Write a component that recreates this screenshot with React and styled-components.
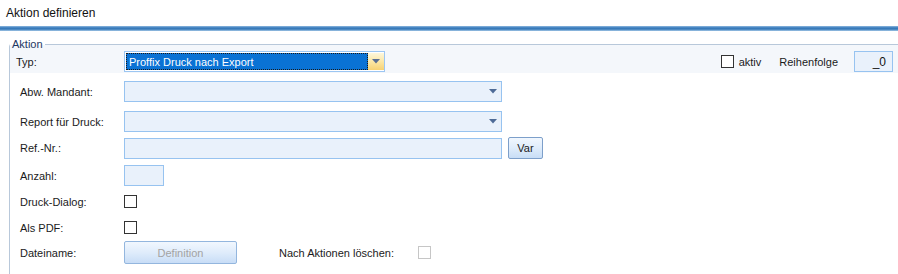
import styled, { createGlobalStyle } from "styled-components";

const Global = createGlobalStyle`
  html, body {
    margin: 0;
    background: #fff;
    overflow: hidden;
  }
  body {
    font-family: "Liberation Sans", Arial, sans-serif;
    font-size: 11px;
    color: #1b1b1b;
  }
`;

const Header = styled.div`
  height: 26px;
  display: flex;
  align-items: center;
  padding-left: 6px;
  font-size: 12px;
  color: #111;
`;

const BlueBar = styled.div`
  height: 5px;
  background: linear-gradient(
    to bottom,
    #8fb9df 0%,
    #3f80bf 35%,
    #3276b6 60%,
    #a3c7e7 100%
  );
`;

const Group = styled.fieldset`
  margin: 7px 0 0 9px;
  padding: 0 0 20px 0;
  min-width: 0;
  border: 1px solid #b8c8da;
  border-right: none;
  border-bottom: none;
  border-radius: 3px 0 0 0;
  background: linear-gradient(to bottom, #f4f7fb 0, #f4f7fb 28px, #fff 28px);
  legend {
    margin-left: 0;
    padding: 0 2px;
    font-size: 11px;
    color: #1e3762;
  }
`;

const Row = styled.div`
  display: flex;
  align-items: center;
  height: ${(p) => p.$h || 21}px;
  margin-top: ${(p) => p.$mt || 0}px;
  padding-left: ${(p) => p.$indent ?? 10}px;
  padding-right: 5px;
`;

const Label = styled.span`
  width: ${(p) => p.$w || 104}px;
  flex: none;
  white-space: nowrap;
`;

const Field = styled.div`
  box-sizing: border-box;
  width: ${(p) => p.$w}px;
  height: ${(p) => p.$h || 21}px;
  border: 1px solid #97c3f0;
  background: #e9f1fb;
  display: flex;
  align-items: center;
  justify-content: flex-end;
  padding: 0 6px;
  font-size: 12px;
  color: #111;
`;

const TypCombo = styled.div`
  box-sizing: border-box;
  width: 261px;
  height: 21px;
  border: 1px solid #9cc6f2;
  background: #fff;
  display: flex;
  padding: 1px 0 1px 1px;
`;

const Selected = styled.div`
  flex: 1;
  box-sizing: border-box;
  background: #0a72d4;
  border: 1px dotted #1a1a1a;
  color: #fff;
  font-size: 11px;
  display: flex;
  align-items: center;
  padding-left: 2px;
`;

const YellowButton = styled.div`
  width: 16px;
  display: flex;
  align-items: center;
  justify-content: center;
  background: linear-gradient(to bottom, #fdf7dc 0%, #fbe7a6 50%, #f7d273 100%);
`;

const ArrowIcon = ({ color = "#4e6b97" }) => (
  <svg width="8" height="5" viewBox="0 0 8 5">
    <polygon points="0,0 8,0 4,4.5" fill={color} />
  </svg>
);

const Combo = styled(Field)`
  padding-right: 4px;
`;

const Box = styled.span`
  box-sizing: border-box;
  display: inline-block;
  width: 13px;
  height: 13px;
  flex: none;
  background: #fff;
  border: 1px solid ${(p) => (p.$disabled ? "#c6c6c6" : "#333")};
`;

const Right = styled.div`
  margin-left: auto;
  display: flex;
  align-items: center;
`;

const RightText = styled.span`
  margin-left: ${(p) => p.$ml || 0}px;
  font-size: 11px;
`;

const Button = styled.div`
  box-sizing: border-box;
  width: ${(p) => p.$w}px;
  height: ${(p) => p.$h}px;
  margin-left: ${(p) => p.$ml || 0}px;
  border: 1px solid ${(p) => (p.$disabled ? "#93b6de" : "#7d9fca")};
  border-radius: 2px;
  background: linear-gradient(to bottom, #f1f7fe 0%, #dfecfb 50%, #c8ddf6 100%);
  display: flex;
  align-items: center;
  justify-content: center;
  font-size: 11px;
  color: ${(p) => (p.$disabled ? "#a3a3a3" : "#1b1b1b")};
`;

export default function App() {
  return (
    <>
      <Global />
      <Header>Aktion definieren</Header>
      <BlueBar />
      <Group>
        <legend>Aktion</legend>
        <Row $indent={6} $mt={1}>
          <Label $w={108}>Typ:</Label>
          <TypCombo>
            <Selected>Proffix Druck nach Export</Selected>
            <YellowButton>
              <ArrowIcon color="#5a6f93" />
            </YellowButton>
          </TypCombo>
          <Right>
            <Box />
            <RightText $ml={5}>aktiv</RightText>
            <RightText $ml={18}>Reihenfolge</RightText>
            <Field $w={39} style={{ marginLeft: 16 }}>_0</Field>
          </Right>
        </Row>
        <Row $mt={9}>
          <Label>Abw. Mandant:</Label>
          <Combo $w={378}>
            <ArrowIcon />
          </Combo>
        </Row>
        <Row $mt={9}>
          <Label>Report für Druck:</Label>
          <Combo $w={378}>
            <ArrowIcon />
          </Combo>
        </Row>
        <Row $mt={5} $h={22}>
          <Label>Ref.-Nr.:</Label>
          <Field $w={378} />
          <Button $w={35} $h={22} $ml={6}>Var</Button>
        </Row>
        <Row $mt={6}>
          <Label>Anzahl:</Label>
          <Field $w={40} />
        </Row>
        <Row $mt={5}>
          <Label>Druck-Dialog:</Label>
          <Box />
        </Row>
        <Row $mt={5}>
          <Label>Als PDF:</Label>
          <Box />
        </Row>
        <Row $mt={3} $h={23}>
          <Label>Dateiname:</Label>
          <Button $w={113} $h={23} $disabled>Definition</Button>
          <Label $w={139} style={{ marginLeft: 42 }}>Nach Aktionen löschen:</Label>
          <Box $disabled />
        </Row>
      </Group>
    </>
  );
}
